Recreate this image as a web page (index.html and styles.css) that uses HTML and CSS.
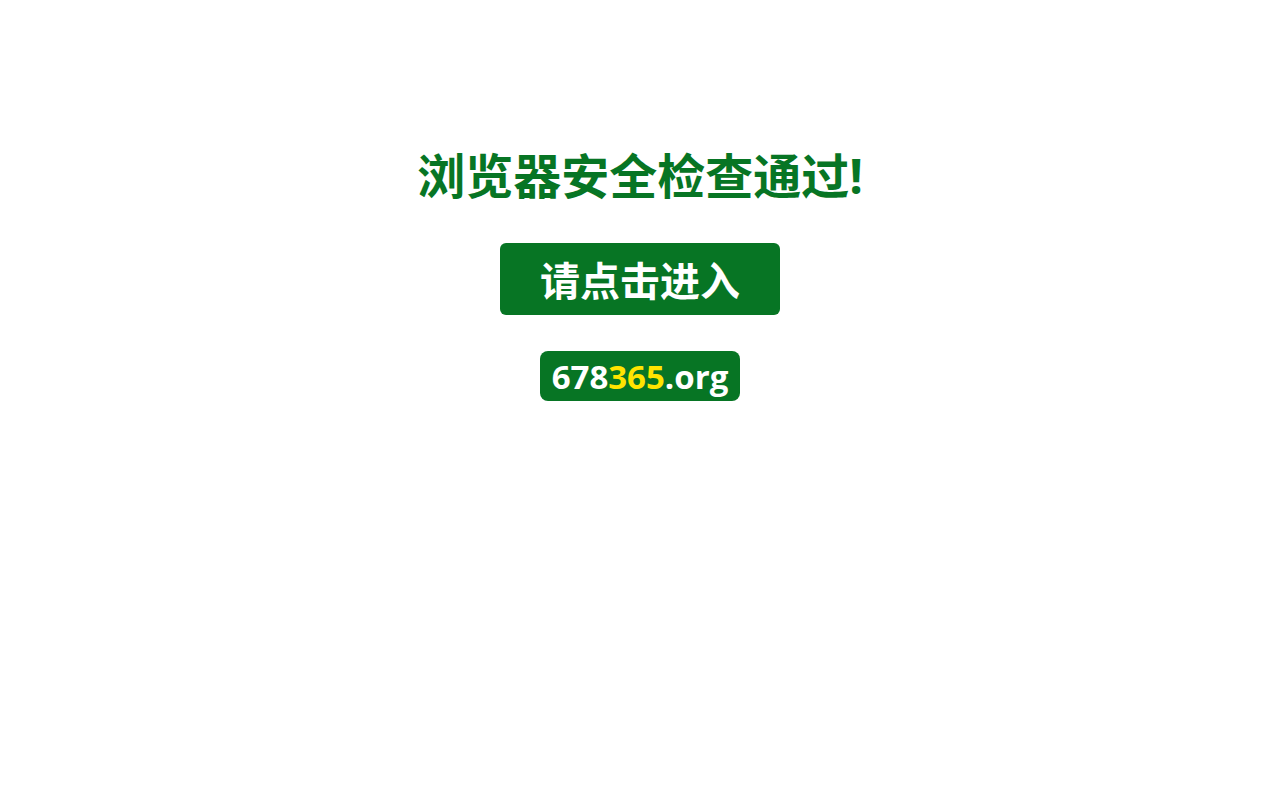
FILE: index.html
```html
<!DOCTYPE html>
<html lang="zh-CN">
<head>
<meta charset="utf-8">
<title>浏览器安全检查通过</title>
<link rel="stylesheet" href="styles.css">
</head>
<body>
<main class="page">
  <h1 class="title">浏览器安全检查通过!</h1>
  <a class="enter" href="#">请点击进入</a>
  <div class="domain"><span class="white">678</span><span class="yellow">365</span><span class="white">.org</span></div>
</main>
</body>
</html>
```
FILE: styles.css
```css
html, body {
  margin: 0;
  padding: 0;
  background: #ffffff;
}
body {
  font-family: "Open Sans", "Noto Sans CJK SC", sans-serif;
}
.page {
  display: flex;
  flex-direction: column;
  align-items: center;
  padding-top: 140px;
}
.title {
  margin: 0;
  font-size: 48px;
  line-height: 72px;
  font-weight: 700;
  color: #077524;
  letter-spacing: 0;
}
.enter {
  margin-top: 31px;
  width: 280px;
  height: 72px;
  border-radius: 6px;
  background: #077524;
  color: #ffffff;
  text-decoration: none;
  font-size: 40px;
  font-weight: 700;
  display: flex;
  align-items: center;
  justify-content: center;
}
.domain {
  margin-top: 36px;
  width: 200px;
  height: 50px;
  border-radius: 8px;
  background: #077524;
  display: flex;
  align-items: center;
  justify-content: center;
  font-family: "Open Sans", sans-serif;
  font-size: 33px;
  font-weight: 700;
}
.white { color: #ffffff; }
.yellow { color: #ffe400; }
```
